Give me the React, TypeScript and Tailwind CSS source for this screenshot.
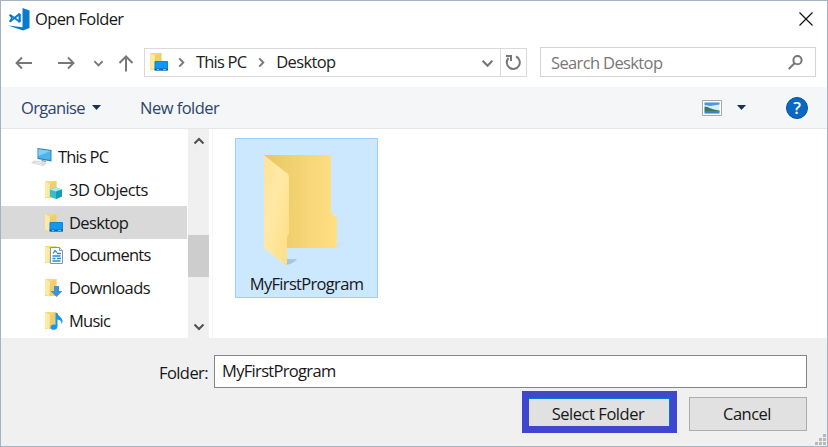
import type { ReactNode } from "react";

function FolderBase() {
  return (
    <>
      <path d="M1 1h11.500v17H1z" fill="#f5d77e" />
      <path d="M1 1l5 3v14.500L1 16.500z" fill="#ffe9a6" />
      <path d="M6 4l6.500-3v17H5z" fill="#edca68" opacity=".65" />
    </>
  );
}

function SmallFolder({ children }: { children: ReactNode }) {
  return (
    <svg width="20" height="20" viewBox="0 0 20 20" className="shrink-0">
      <FolderBase />
      {children}
    </svg>
  );
}

function DesktopIcon() {
  return (
    <SmallFolder>
      <path d="M6 9.500h12.500v8.500H6z" fill="#1497f1" stroke="#1583cf" />
      <path d="M5.500 16.500H19V18.500H5.500z" fill="#086ab5" />
      <path d="M8 17.500h2M14 17.500h3" stroke="#65c4ff" />
    </SmallFolder>
  );
}

function PcIcon() {
  return (
    <svg width="22" height="20" viewBox="0 0 22 20" className="shrink-0">
      <path d="M6.500 1l14 2v11.500l-14-2.500z" fill="#2b84bd" />
      <path d="M7.500 2.300l12 1.800v9l-12-2.200z" fill="#4fb4ee" />
      <path d="M7.500 2.300l12 1.800L7.500 9z" fill="#83cff8" />
      <path d="M11 13l4 .7v1.300l-5-.7z" fill="#8498a5" />
      <path d="M4 13.500l12 2.400-4 3L0 15.900z" fill="#c9d2d9" />
      <path d="M4 14.700l9 1.700M2.500 15.900l9 1.700" stroke="#fff" strokeWidth=".6" />
    </svg>
  );
}

function Chevron({ className = "" }: { className?: string }) {
  return (
    <svg width="12" height="12" viewBox="0 0 12 12" fill="none" stroke="currentColor" strokeWidth="2" className={className}>
      <path d="M1.500 3.500L6 8l4.500-4.500" />
    </svg>
  );
}

const places = [
  {
    name: "3D Objects",
    track: "tracking-[-0.48px]",
    icon: (
      <SmallFolder>
        <path d="M6 9.500l6-2 6 2v7l-6 2.500-6-2.500z" fill="#35bdd0" />
        <path d="M6 9.500l6-2 6 2-6 2z" fill="#a4edf1" />
        <path d="M12 11.500l6-2v7L12 19z" fill="#159eb8" />
      </SmallFolder>
    ),
  },
  { name: "Desktop", track: "tracking-[-0.62px]", icon: <DesktopIcon /> },
  {
    name: "Documents",
    track: "tracking-[-0.75px]",
    icon: (
      <SmallFolder>
        <path d="M6.500 2.500h9l3 3v13h-12z" fill="#fff" stroke="#8c9297" />
        <path d="M15.500 2.500v3h3" fill="#e8eef2" stroke="#8c9297" />
        <path d="M9 8.500l2-3 2 2M13 8.500h4M8.500 11h8M8.500 13.500h3M13 13.500h4M8.500 16h8" fill="none" stroke="#268bd1" strokeWidth="1.300" />
      </SmallFolder>
    ),
  },
  {
    name: "Downloads",
    track: "tracking-[-0.55px]",
    icon: (
      <SmallFolder>
        <path d="M10 8h5v5h3.500l-6 6-6-6H10z" fill="#3f91dc" />
      </SmallFolder>
    ),
  },
  {
    name: "Music",
    track: "tracking-[-0.75px]",
    icon: (
      <SmallFolder>
        <path d="M11.500 2h2c0 3 5 4 5 8 0 1.500-.5 2.500-1 3 .2-3-1.500-4-4-4.500v7c0 4-7 4.500-7 1 0-3 3-3.500 5-2.700z" fill="#109bf2" />
      </SmallFolder>
    ),
  },
];

function TitleBar() {
  return (
    <header className="flex h-9 items-center pl-[7px] pr-3">
      <svg width="23" height="23" viewBox="0 0 23 23">
        <path d="M14.500 0L21.500 2.500v17.500L15 22.500 0 17.500l14.500 1.800z" fill="#087bcb" />
        <path d="M2 7L11.500 13.500M2 13.500L11.500 6" stroke="#087bcb" strokeWidth="2" fill="none" />
        <path d="M1 7l1.500-.8L4 7.500v5.500L2.500 14.200 1 13.500 3 10zM10.500 5L12.800 6v8l-2.300 1z" fill="#087bcb" />
      </svg>
      <h1 className="ml-1 tracking-[-0.63px]">Open Folder</h1>
      <svg width="14" height="14" viewBox="0 0 14 14" className="ml-auto mr-[2px]" stroke="#111" strokeWidth="1.200">
        <path d="M.5.500l13 13M13.500.500l-13 13" />
      </svg>
    </header>
  );
}

function Navigation() {
  return (
    <nav className="flex h-[50px] items-center pl-[14px] pr-[11px] text-[#777]">
      <svg width="18" height="14" viewBox="0 0 18 14" fill="none" stroke="currentColor" strokeWidth="1.900" className="mt-[2px]">
        <path d="M17 7H2M7 1.500L1.500 7 7 12.500" />
      </svg>
      <svg width="18" height="14" viewBox="0 0 18 14" className="ml-6 mt-[2px]" fill="none" stroke="currentColor" strokeWidth="1.900">
        <path d="M1 7h15M11 1.500L16.500 7 11 12.500" />
      </svg>
      <Chevron className="ml-[18px] mt-[2px] h-[11px] w-[11px]" />
      <svg width="16" height="17" viewBox="0 0 16 17" className="ml-[14px] mt-[3px]" fill="none" stroke="currentColor" strokeWidth="2">
        <path d="M8 16.500V2M1.500 8L8 1.500 14.500 8" />
      </svg>
      <div className="ml-[10px] flex h-[29px] w-[383px] items-center border border-[#d9d9d9] text-[#222]">
        <div className="ml-[4px]"><DesktopIcon /></div>
        <Chevron className="ml-[7px] h-[11px] w-[11px] -rotate-90 text-[#777]" />
        <span className="ml-[9px] tracking-[-0.8px]">This PC</span>
        <Chevron className="ml-[10px] h-[11px] w-[11px] -rotate-90 text-[#777]" />
        <span className="ml-[9px] tracking-[-0.62px]">Desktop</span>
        <Chevron className="ml-auto mr-[6px] mt-[2px] h-[13px] w-[13px] text-[#777]" />
        <div className="flex h-full w-[26px] items-center justify-center border-l border-[#d9d9d9]">
          <svg width="17" height="17" viewBox="0 0 17 17" fill="none" stroke="#777" strokeWidth="2">
            <path d="M11 2.500A6.500 6.500 0 1 1 3.500 4" />
            <path d="M1 2h5v5" />
          </svg>
        </div>
      </div>
      <div className="ml-[13px] flex h-[30px] min-w-0 flex-1 items-center border border-[#d5d5d5] pl-[10px] pr-3">
        <span className="pt-[2px] tracking-[-0.63px]">Search Desktop</span>
        <svg width="15" height="15" viewBox="0 0 15 15" className="ml-auto" fill="none" stroke="currentColor" strokeWidth="2">
          <circle cx="9.500" cy="5.200" r="4.100" />
          <path d="M6.500 8.200L.7 14" />
        </svg>
      </div>
    </nav>
  );
}

function Toolbar() {
  return (
    <div className="flex h-[42px] items-center border-b border-[#e5e8eb] bg-[#f4f6f8] pl-[20px] pr-[18px] text-[#2d4469]">
      <span className="w-[65px] pt-px tracking-[-0.65px]">Organise</span>
      <svg width="9" height="5" viewBox="0 0 9 5" className="ml-[6px]"><path d="M0 0h9L4.500 5z" fill="#1c3157" /></svg>
      <span className="ml-[39px] pt-px tracking-[-0.53px]">New folder</span>
      <svg width="20" height="16" viewBox="0 0 20 16" className="ml-auto">
        <path d="M.5.500h19v15H.5z" fill="#fff" stroke="#a5a8ac" />
        <path d="M2.500 2.500h15v11h-15z" fill="#d8eefa" />
        <path d="M2.500 2.500h15v2L8 6 2.500 5z" fill="#4f95e2" />
        <path d="M2.500 6.500c4 0 6 3 15 4v1h-15z" fill="#397764" />
        <path d="M2.500 11h15v2.500h-15z" fill="#3e83bd" />
      </svg>
      <svg width="9" height="5" viewBox="0 0 9 5" className="ml-[15px]"><path d="M0 0h9L4.500 5z" fill="#1c3157" /></svg>
      <div className="ml-10 mr-px flex size-[22px] items-center justify-center rounded-full border border-[#07539c] bg-[#0868c4] text-[17px] font-semibold leading-none text-white">?</div>
    </div>
  );
}

function Sidebar() {
  return (
    <aside className="flex h-[209px] w-[212px] shrink-0 border-r border-[#f7f7f7]">
      <div className="w-[186px] pt-[12px]">
        <div className="flex h-[32.500px] items-center pl-[30px]">
          <PcIcon /><span className="ml-[5px] tracking-[-0.8px]">This PC</span>
        </div>
        {places.map((place) => (
          <div key={place.name} className={`flex h-[32.700px] items-center pl-[43px] ${place.name === "Desktop" ? "bg-[#d9d9d9]" : ""}`}>
            {place.icon}<span className={`ml-[5px] ${place.track}`}>{place.name}</span>
          </div>
        ))}
      </div>
      <div className="ml-[1px] flex w-[21px] flex-col items-center bg-[#f0f0f0] text-[#505050]">
        <Chevron className="mt-[6px] rotate-180" />
        <div className="mt-[88px] h-[42px] w-[21px] bg-[#cdcdcd]" />
        <Chevron className="mb-[5px] mt-auto" />
      </div>
    </aside>
  );
}

function FolderTile() {
  return (
    <div className="ml-[22px] mt-[9px] flex h-[160px] w-[143px] flex-col items-center border border-[#99d1ff] bg-[#cce8ff]">
      <svg width="86" height="116" viewBox="0 0 86 116" className="mr-[4px] mt-[14px] shrink-0">
        <defs>
          <linearGradient id="folder-back">
            <stop stopColor="#e8c663" /><stop offset="1" stopColor="#ffe083" />
          </linearGradient>
          <linearGradient id="folder-front" x2="1" y2="1">
            <stop stopColor="#ffe295" /><stop offset=".4" stopColor="#ffe9a6" /><stop offset="1" stopColor="#fddd84" />
          </linearGradient>
          <linearGradient id="folder-shadow"><stop stopColor="#668ca0" stopOpacity=".4" /><stop offset="1" stopColor="#668ca0" stopOpacity="0" /></linearGradient>
        </defs>
        <path d="M74 90l9 0q2 2-9 5zM24 106l11 0q-2 4-11 6z" fill="url(#folder-shadow)" />
        <path d="M2 2h66q1 0 1 1v56l6 6v29q0 1-1 1H24L2 9z" fill="url(#folder-back)" />
        <path d="M2 2l24 19q1 1 1 3v57l-2 3v29L2 95z" fill="url(#folder-front)" />
      </svg>
      <span className="mt-[2px] leading-[26px] tracking-[-0.68px]">MyFirstProgram</span>
    </div>
  );
}

function Footer() {
  return (
    <footer className="relative h-[108px] bg-[#f0f0f0] pt-[17px]">
      <div className="flex items-center">
        <label htmlFor="folder" className="w-[207px] pt-[2px] text-right tracking-[-0.58px]">Folder:</label>
        <input id="folder" defaultValue="MyFirstProgram" className="ml-[6px] h-[33px] w-[593px] border border-[#858585] bg-white px-[7px] pb-[2px] tracking-[-0.68px] outline-none" />
      </div>
      <div className="mt-[3px] flex items-center pl-[521px]">
        <button className="h-[42px] w-[155px] border-[7px] border-[#3f48cc] bg-[#e1e1e1] pr-[3px] pt-[3px] tracking-[-0.45px] shadow-[inset_-1px_1px_0_#0078d7]">Select Folder</button>
        <button className="ml-3 mt-[3px] h-[34px] w-[118px] border border-[#adadad] bg-[#e1e1e1] pr-[2px] tracking-[-0.5px]">Cancel</button>
      </div>
      <svg width="12" height="12" viewBox="0 0 12 12" className="absolute bottom-0 right-[1px]" fill="#b8b8b8">
        <path d="M9 0h3v3H9zM5 4h3v3H5zM9 4h3v3H9zM1 8h3v3H1zM5 8h3v3H5zM9 8h3v3H9z" />
      </svg>
    </footer>
  );
}

export default function App() {
  return (
    <main className="h-[447px] w-[828px] overflow-hidden border border-[#a5b2c6] bg-white font-['Open_Sans',sans-serif] text-[16.500px] leading-6 text-[#171717]">
      <TitleBar />
      <Navigation />
      <Toolbar />
      <div className="flex h-[209px]"><Sidebar /><FolderTile /></div>
      <Footer />
    </main>
  );
}
